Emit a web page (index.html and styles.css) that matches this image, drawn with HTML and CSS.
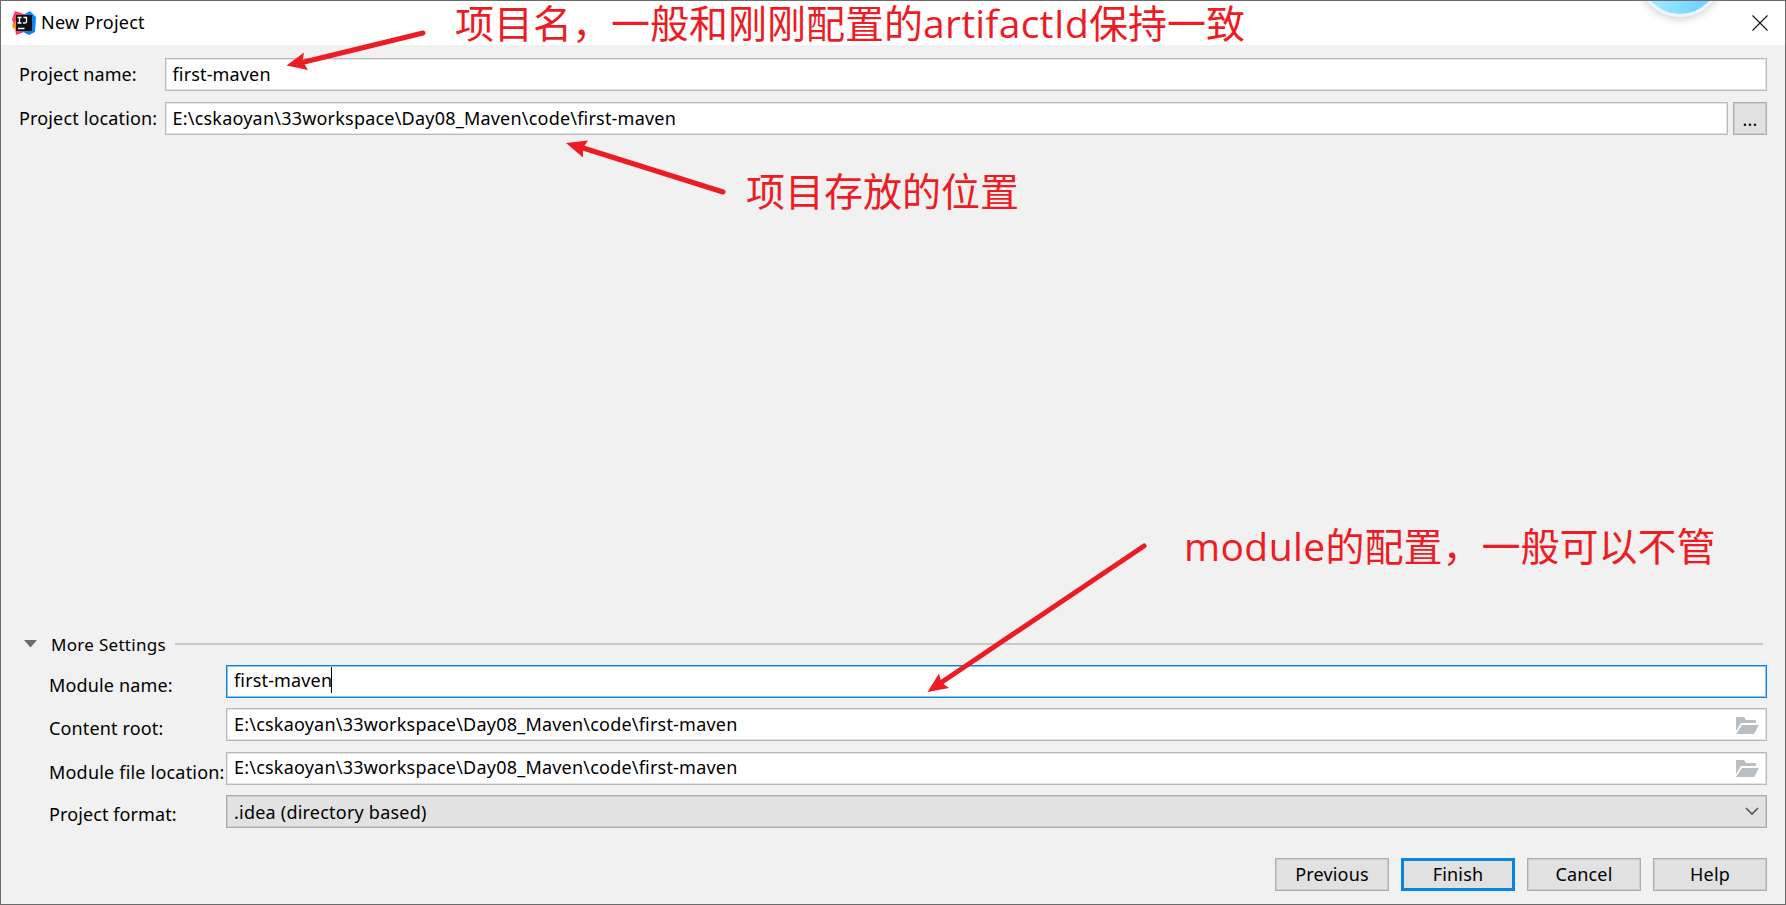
FILE: index.html
```html
<!DOCTYPE html>
<html lang="zh-CN">
<head>
<meta charset="utf-8">
<title>New Project</title>
<link rel="stylesheet" href="styles.css">
</head>
<body>
<div class="window">
  <header class="titlebar">
    <svg class="logo" width="24" height="24" viewBox="0 0 24 24">
      <path fill="#fe3a6b" d="M3 0 12 3 18 10 12 21 4 24 3 17 0 8Z"/>
      <path fill="#fc8a1b" d="M0 14 4 10 5 19 1 17Z"/>
      <path fill="#0a84f7" d="M11 4 18 0 24 6 23 21 17 24 9 20Z"/>
      <path fill="#111" d="M4 4h16v16H4z"/>
      <path fill="none" stroke="#fff" stroke-width="1.3" d="M5.500 6.500h4M7.500 6.500v5.500M5.500 12h4M11.500 6.500h3v4q0 1.500-1.500 1.500h-2M6 17.500h6.500"/>
    </svg>
    <span class="title">New Project</span>
    <svg class="close" width="16" height="16" viewBox="0 0 16 16"><path d="M.5.5l15 15M15.5.5l-15 15" stroke="#111" stroke-width="1.1"/></svg>
  </header>
  <main class="content">
    <div class="row top"><label class="label name">Project name:</label><div class="field">first-maven</div></div>
    <div class="row top"><label class="label loc">Project location:</label><div class="field path">E:\cskaoyan\33workspace\Day08_Maven\code\first-maven</div><div class="browse">...</div></div>
    <div class="spacer"></div>
    <div class="section"><svg width="13" height="8" viewBox="0 0 13 8"><path fill="#6e6e6e" d="M0 0h13L6.500 7.500z"/></svg><span class="section-title">More Settings</span><span class="rule"></span></div>
    <div class="row more"><label class="label">Module name:</label><div class="field focused">first-maven<span class="caret"></span></div></div>
    <div class="row more"><label class="label root">Content root:</label><div class="field path">E:\cskaoyan\33workspace\Day08_Maven\code\first-maven
      <svg class="folder" width="23" height="18" viewBox="0 0 23 18"><path fill="#b8bec2" d="M0 0h8l2 3h10v3H5L0 14z"/><path fill="#b8bec2" d="M6 8h17l-5 9H0z"/></svg></div></div>
    <div class="row more"><label class="label wide">Module file location:</label><div class="field path low">E:\cskaoyan\33workspace\Day08_Maven\code\first-maven
      <svg class="folder" width="23" height="18" viewBox="0 0 23 18"><path fill="#b8bec2" d="M0 0h8l2 3h10v3H5L0 14z"/><path fill="#b8bec2" d="M6 8h17l-5 9H0z"/></svg></div></div>
    <div class="row more"><label class="label format">Project format:</label><div class="field combo">.idea (directory based)
      <svg class="chevron" width="14" height="9" viewBox="0 0 14 9"><path d="M1 1l6 6 6-6" fill="none" stroke="#555" stroke-width="1.6"/></svg></div></div>
  </main>
  <footer class="actions">
    <div class="button">Previous</div><div class="button primary">Finish</div><div class="button">Cancel</div><div class="button">Help</div>
  </footer>
  <div class="bubble"></div>
  <svg class="arrows" width="1786" height="905" viewBox="0 0 1786 905">
    <g stroke="#ed1c24" stroke-width="5" stroke-linecap="round">
      <path d="M423 33 300 63M723 192 580 147M1144 546 942 682"/>
    </g>
    <g fill="#ed1c24">
      <path d="M286.500 65.500 304 52.500 302.500 61 308 70Z"/>
      <path d="M566 143 588 140.500 583 148 583 157.500Z"/>
      <path d="M927.500 692 939 673.500 941.500 682.500 949 688Z"/>
    </g>
  </svg>
  <div class="note note-name">项目名，一般和刚刚配置的<span class="latin artifact">artifactId</span>保持一致</div>
  <div class="note note-location">项目存放的位置</div>
  <div class="note note-module"><span class="latin module">module</span>的配置，一般可以不管</div>
</div>
</body>
</html>
```
FILE: styles.css
```css
* { box-sizing: border-box; }
body { margin: 0; }
.window {
  position: relative;
  width: 1786px;
  height: 905px;
  overflow: hidden;
  display: flex;
  flex-direction: column;
  background: #f1f1f1;
  border: 1px solid #6b6b6b;
  font: 18px/20px "Noto Sans", sans-serif;
  letter-spacing: 0.15px;
  color: #000;
  white-space: nowrap;
}
.titlebar { height: 44px; display: flex; align-items: center; background: #fff; padding: 0 17px 1px 11px; }
.title { margin-left: 5px; padding-bottom: 1px; letter-spacing: 0.25px; }
.close { margin-left: auto; }
.content { flex: 1; display: flex; flex-direction: column; padding: 13px 18px 0 18px; }
.row { display: flex; align-items: center; height: 33px; }
.row.top { margin-bottom: 11px; }
.row.top .label { width: 145.500px; padding-bottom: 2px; }
.row.top .name { letter-spacing: 0.1px; }
.row.top .field { padding-bottom: 2px; }
.spacer { flex: 1; }
.field { flex: 1; height: 33px; display: flex; align-items: center; background: #fff; border: 1px solid #bababa; padding: 0 7px; box-shadow: inset 0 0 0 1px #e3e3e3; }
.field.path { letter-spacing: 0.21px; }
.browse { width: 34px; height: 33px; margin-left: 5px; padding-top: 6px; text-align: center; background: #e1e1e1; border: 1px solid #adadad; box-shadow: inset 0 0 0 1px #cdcdcd; }
.section { display: flex; align-items: center; height: 20px; padding: 0 4px 0 5px; margin-bottom: 11px; }
.section svg { margin-top: 1px; }
.section-title { margin: 2px 0 0 14px; letter-spacing: 0.3px; font-size: 17px; }
.rule { flex: 1; height: 2px; margin-left: 9px; background: #c9c9c9; }
.row.more { padding-left: 30px; margin-bottom: 10.600px; }
.row.more .label { width: 177px; padding-top: 8px; }
.row.more .root { padding-top: 6px; }
.row.more .wide { letter-spacing: 0.2px; }
.row.more .field { padding-bottom: 1px; }
.row.more .focused { padding-bottom: 2px; }
.row.more .low { padding-bottom: 3px; }
.row.more .format { padding-top: 4px; letter-spacing: 0.1px; }
.row.more .combo { padding-bottom: 0; letter-spacing: 0.22px; background: #e2e2e2; border-color: #a9a9a9; box-shadow: inset 0 0 0 1px #cdcdcd; }
.field.focused { border-color: #0a84dc; box-shadow: inset 0 0 0 1px #8cc4ee; }
.caret { width: 1px; height: 26px; margin-left: -1px; background: #000; }
.folder { margin: 3px 0 0 auto; }
.low .folder { margin-top: 4px; }
.chevron { margin-left: auto; }
.actions { display: flex; justify-content: flex-end; gap: 12px; padding: 19px 18px 13px 0; }
.button { width: 114px; height: 33px; display: flex; align-items: center; justify-content: center; padding-bottom: 2px; background: #e1e1e1; border: 1px solid #adadad; box-shadow: inset 0 0 0 1px #cdcdcd; }
.button.primary { border: 3px solid #0884e2; box-shadow: none; }
.bubble { position: absolute; left: 1637px; top: -68px; width: 84px; height: 84px; border-radius: 50%; border: 3px solid #edf5fd; background: linear-gradient(100deg, #9be9ff 30%, #76d3ff 75%); box-shadow: 0 2px 8px #0003; }
.arrows { position: absolute; left: -1px; top: -1px; }
.note { position: absolute; color: #ed1c24; font: 39px/44px "Noto Sans CJK SC", sans-serif; font-weight: 400; letter-spacing: 0; }
.latin { font-family: "Open Sans", "Noto Sans", sans-serif; font-weight: 400; letter-spacing: 0.25px; }
.latin.module { letter-spacing: 0.4px; }
.note-name { left: 454px; top: -2px; }
.note-location { left: 745px; top: 166px; }
.note-module { left: 1183px; top: 521px; }
```
